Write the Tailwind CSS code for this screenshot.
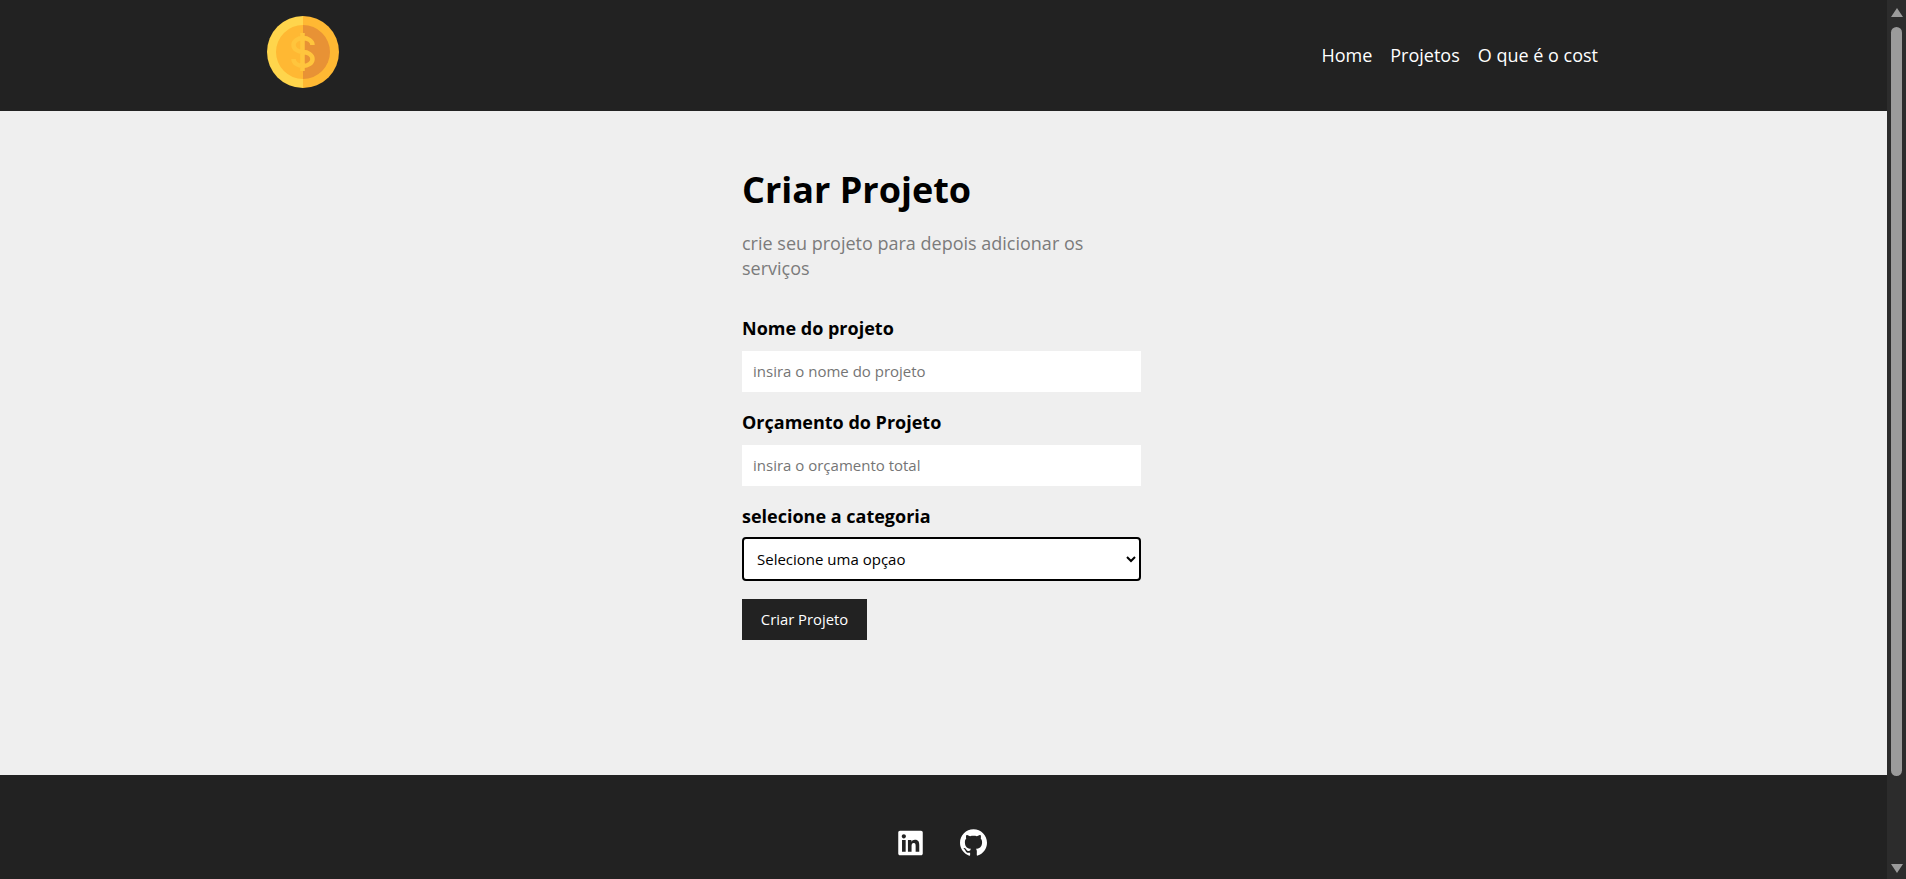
<!DOCTYPE html>
<html lang="pt-BR">
<head>
  <meta charset="UTF-8">
  <meta name="viewport" content="width=device-width, initial-scale=1.0">
  <title>Costs</title>
  <script src="https://cdn.jsdelivr.net/npm/@tailwindcss/browser@4"></script>
</head>
<body class="h-screen overflow-hidden flex bg-[#222222] font-['Open_Sans',sans-serif]">
  <div class="flex-1 min-w-0 flex flex-col">
    <!-- navbar -->
    <header class="h-[111px] shrink-0 bg-[#222222] flex justify-between pl-[267px] pr-[289px]">
      <a href="#" class="block mt-4">
        <svg class="w-[72px] h-[72px]" viewBox="0 0 72 72">
          <path d="M36 0a36 36 0 0 0 0 72z" fill="#ffd54c"/>
          <path d="M36 0a36 36 0 0 1 0 72z" fill="#ffb833"/>
          <path d="M36 9a27 27 0 0 0 0 54z" fill="#ffb833"/>
          <path d="M36 9a27 27 0 0 1 0 54z" fill="#e89235"/>
          <path d="M45.500 29c0-4-4.500-7-9.500-7s-9.500 3-9.500 7 4.500 7 9.500 7 9.500 3 9.500 7-4.500 7-9.500 7-9.500-3-9.500-7M35.500 17v38" fill="none" stroke="#ffc53d" stroke-width="4.500"/>
        </svg>
      </a>
      <ul class="flex items-center gap-[18px] text-[18px] text-white">
        <li><a href="#">Home</a></li>
        <li><a href="#">Projetos</a></li>
        <li><a href="#">O que é o cost</a></li>
      </ul>
    </header>

    <!-- form -->
    <main class="h-[664px] shrink-0 bg-[#efefef] pl-[742px]">
      <div class="w-[399px]">
        <h1 class="pt-[55px] text-[36px] leading-[48px] font-bold text-black">Criar Projeto</h1>
        <p class="mt-[17px] text-[18px] leading-[25px] text-[#7b7b7b]">crie seu projeto para depois adicionar os serviços</p>
        <form class="mt-[35px]">
          <div class="mb-[18px]">
            <label class="block mb-[11px] text-[18px] leading-[24px] font-bold text-black">Nome do projeto</label>
            <input type="text" placeholder="insira o nome do projeto" class="block w-full h-[41px] px-[11px] pb-[2px] bg-white text-[15px] placeholder:text-[#757575]">
          </div>
          <div class="mb-[18px]">
            <label class="block mb-[11px] text-[18px] leading-[24px] font-bold text-black">Orçamento do Projeto</label>
            <input type="number" placeholder="insira o orçamento total" class="block w-full h-[41px] px-[11px] pb-[2px] bg-white text-[15px] placeholder:text-[#757575]">
          </div>
          <div class="mb-[18px]">
            <label class="block mb-[9px] text-[18px] leading-[24px] font-bold text-black">selecione a categoria</label>
            <select class="block w-full h-[44px] px-[9px] bg-white text-[15px] text-black border-2 border-black rounded-[4px]">
              <option>Selecione uma opçao</option>
            </select>
          </div>
          <button type="button" class="block w-[125px] h-[41px] bg-[#222222] text-white text-[14.8px]">Criar Projeto</button>
        </form>
      </div>
    </main>

    <!-- footer -->
    <footer class="flex-1 bg-[#222222] flex justify-center items-start gap-[37px] pt-[54px] pr-[2px]">
      <a href="#" class="block">
        <svg class="w-[25px] h-[28px] text-white" viewBox="0 0 448 512" fill="currentColor"><path d="M416 32H31.900C14.300 32 0 46.500 0 64.300v383.400C0 465.500 14.300 480 31.900 480H416c17.600 0 32-14.500 32-32.300V64.300c0-17.800-14.400-32.300-32-32.300zM135.400 416H69V202.200h66.500V416zm-33.200-243c-21.300 0-38.500-17.300-38.500-38.500S80.900 96 102.200 96c21.200 0 38.500 17.300 38.500 38.500 0 21.300-17.200 38.500-38.500 38.500zm282.100 243h-66.400V312c0-24.800-.5-56.700-34.500-56.700-34.600 0-39.900 27-39.900 54.900V416h-66.400V202.200h63.700v29.200h.9c8.900-16.800 30.600-34.500 62.900-34.500 67.200 0 79.700 44.300 79.700 101.900V416z"/></svg>
      </a>
      <a href="#" class="block">
        <svg class="w-[27px] h-[27px] text-white" viewBox="0 0 24 24" fill="currentColor"><path d="M12 .297c-6.630 0-12 5.373-12 12 0 5.303 3.438 9.800 8.205 11.385.6.113.82-.258.82-.577 0-.285-.01-1.040-.015-2.040-3.338.724-4.042-1.610-4.042-1.610C4.422 18.070 3.633 17.700 3.633 17.700c-1.087-.744.084-.729.084-.729 1.205.084 1.838 1.236 1.838 1.236 1.070 1.835 2.809 1.305 3.495.998.108-.776.417-1.305.76-1.605-2.665-.3-5.466-1.332-5.466-5.930 0-1.310.465-2.380 1.235-3.220-.135-.303-.54-1.523.105-3.176 0 0 1.005-.322 3.300 1.230.96-.267 1.980-.399 3-.405 1.020.006 2.040.138 3 .405 2.280-1.552 3.285-1.230 3.285-1.230.645 1.653.24 2.873.12 3.176.765.84 1.230 1.910 1.230 3.220 0 4.610-2.805 5.625-5.475 5.920.42.36.81 1.096.81 2.220 0 1.606-.015 2.896-.015 3.286 0 .315.21.69.825.57C20.565 22.092 24 17.592 24 12.297c0-6.627-5.373-12-12-12"/></svg>
      </a>
    </footer>
  </div>

  <!-- scrollbar -->
  <div class="w-[19px] shrink-0 bg-[#2c2c2c] flex flex-col items-center">
    <svg class="w-[12px] h-[9px] mt-[8px]" viewBox="0 0 12 9"><path d="M6 0l6 9H0z" fill="#9b9b9b"/></svg>
    <div class="w-[11px] h-[749px] mt-[10px] rounded-full bg-[#9b9b9b]"></div>
    <svg class="w-[12px] h-[9px] mt-[88px]" viewBox="0 0 12 9"><path d="M0 0h12L6 9z" fill="#9b9b9b"/></svg>
  </div>
</body>
</html>
